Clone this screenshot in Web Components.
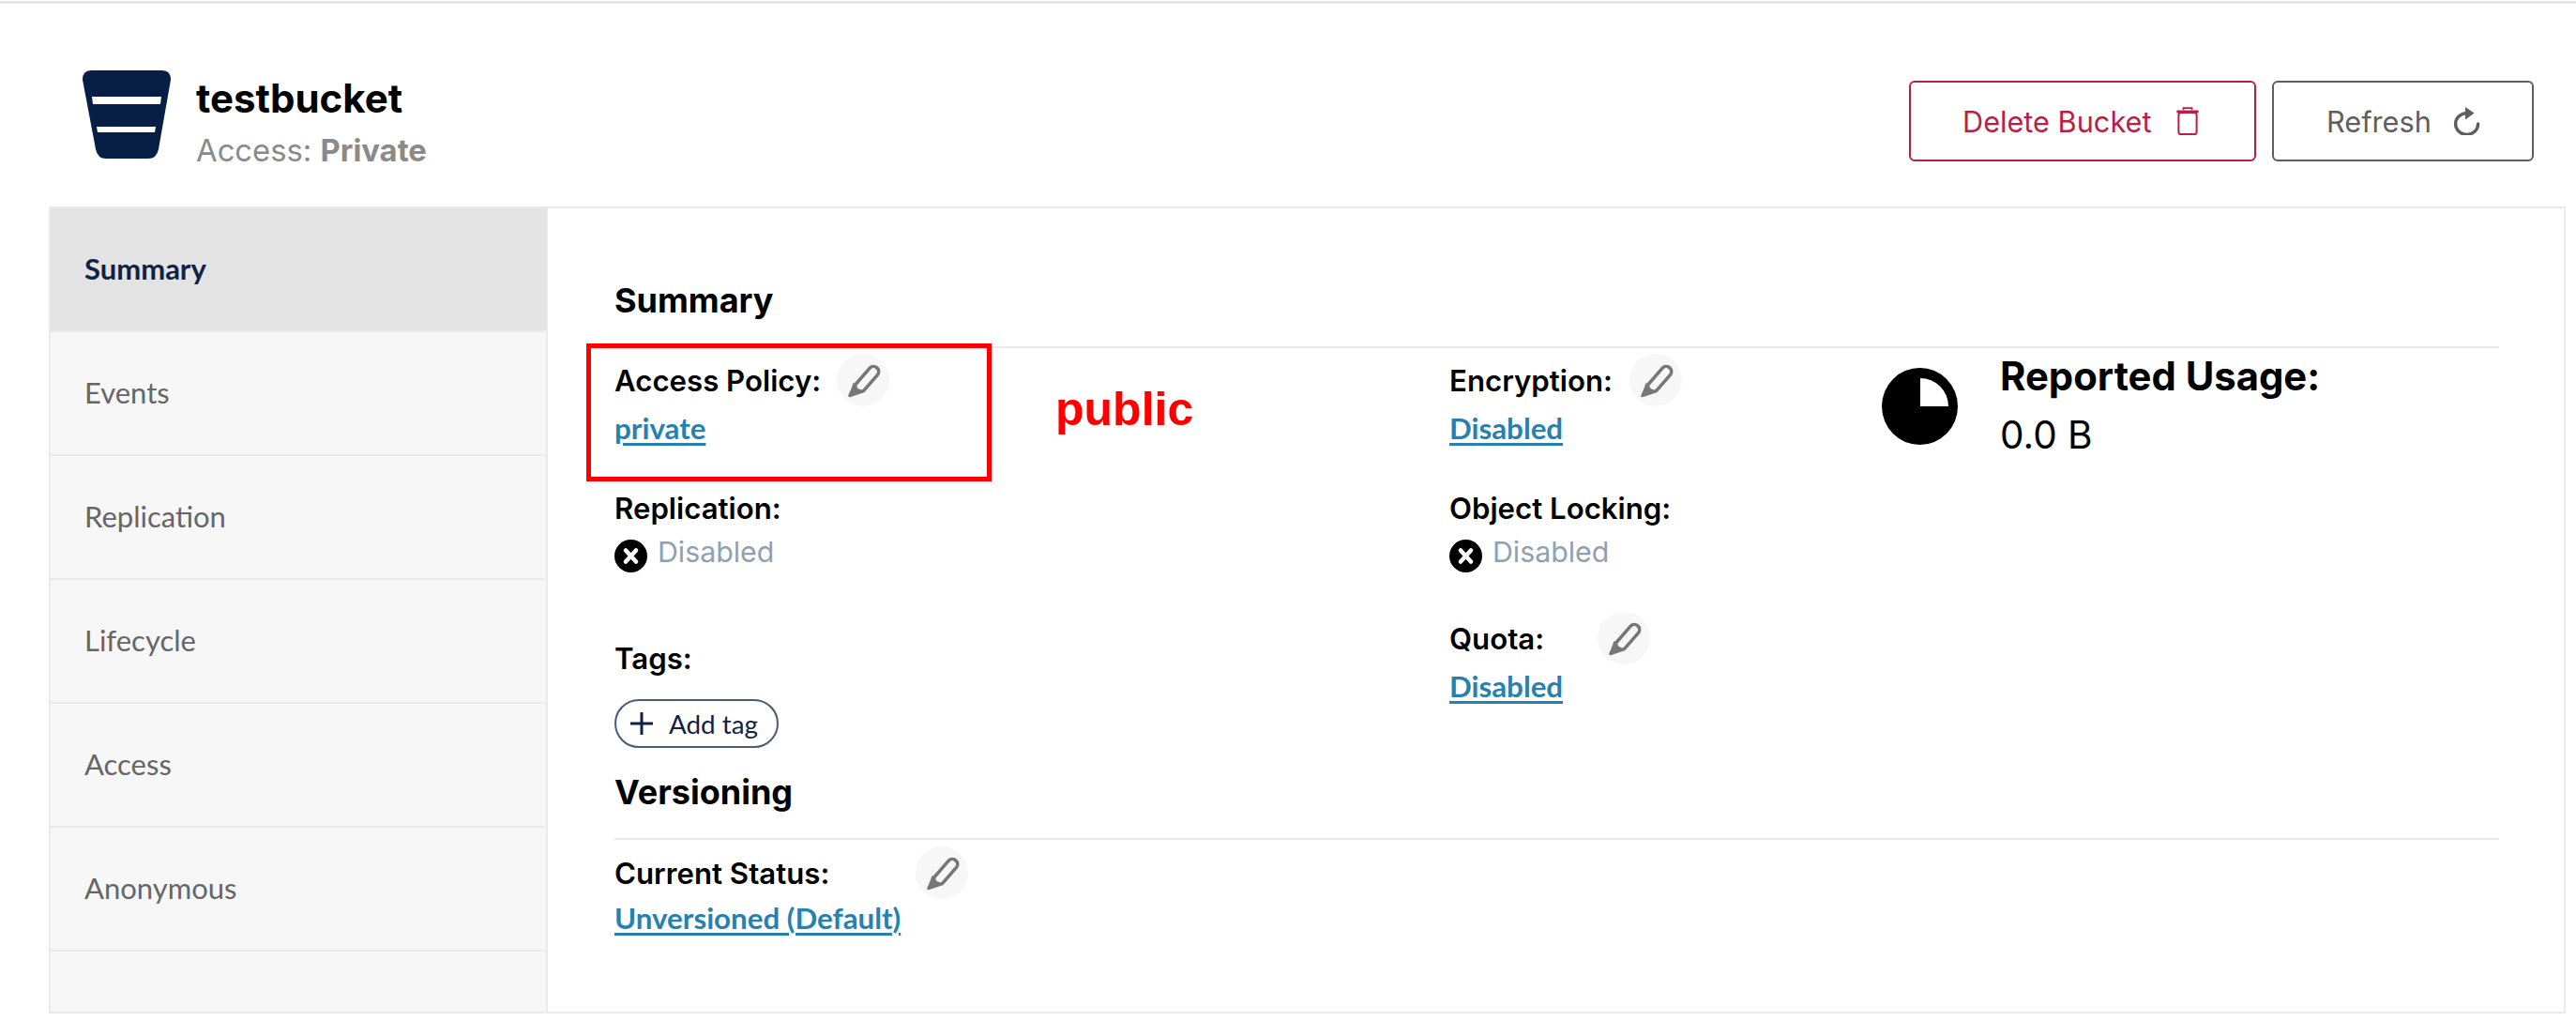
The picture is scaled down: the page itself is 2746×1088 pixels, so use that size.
<!doctype html>
<html>
<head>
<meta charset="utf-8">
<style>
  html, body { margin: 0; padding: 0; background: #fff; }
  body { width: 2746px; height: 1088px; overflow: hidden; font-family: Inter, "Liberation Sans", sans-serif; }
</style>
</head>
<body>
<bucket-page>
  <bucket-header slot="header" name="testbucket" access="Private">
    <action-button kind="danger" label="Delete Bucket" icon="trash"></action-button>
    <action-button kind="plain" label="Refresh" icon="refresh"></action-button>
  </bucket-header>
  <side-nav slot="nav">
    <nav-item active>Summary</nav-item>
    <nav-item>Events</nav-item>
    <nav-item>Replication</nav-item>
    <nav-item>Lifecycle</nav-item>
    <nav-item>Access</nav-item>
    <nav-item>Anonymous</nav-item>
  </side-nav>
  <summary-panel slot="main"></summary-panel>
</bucket-page>

<script>
const PENCIL = `<svg width="38" height="38" viewBox="0 0 34 34" fill="none">
  <path d="M10 21 L23.5 5.5 a4.9 4.9 0 0 1 7.4 6.4 L17.4 27.4 L4.6 31.6 Z" stroke="#777" stroke-width="3.2" stroke-linejoin="round"/>
  <path d="M3 33 L7.6 19.6 L10 21 L12.2 25 L17.4 27.4 Z" fill="#777"/>
</svg>`;

class BucketPage extends HTMLElement {
  constructor() {
    super();
    this.attachShadow({ mode: 'open' });
    this.shadowRoot.innerHTML = `<style>
      :host { display: block; width: 2746px; height: 1088px; box-sizing: border-box; border-top: 3px solid #e6e6e6; margin-top: 1px; }
      .panel { display: flex; height: 860px; margin: 0 11px 0 52px; box-sizing: border-box; border: 2px solid #eaeaea; }
    </style>
    <slot name="header"></slot>
    <div class="panel"><slot name="nav"></slot><slot name="main"></slot></div>`;
  }
}

class BucketHeader extends HTMLElement {
  constructor() {
    super();
    this.attachShadow({ mode: 'open' });
    this.shadowRoot.innerHTML = `<style>
      :host { display: flex; align-items: flex-start; height: 216px; box-sizing: border-box; padding: 71px 45px 0 88px; }
      svg { display: block; flex: none; }
      .names { margin-left: 27px; }
      h1 { margin: 5px 0 0; font: 700 42px/50px Inter, sans-serif; color: #000; }
      p { margin: 9px 0 0; font: 400 32.8px/42px Inter, sans-serif; color: #8a8a8a; }
      b { font-weight: 700; }
      .actions { margin-left: auto; margin-top: 11px; display: flex; gap: 17px; }
    </style>
    <svg width="94" height="94" viewBox="0 0 94 94">
      <path d="M9 0 H85 Q94 0 94 10 L81 84 Q79 94 70 94 H25 Q16 94 14 84 L0 10 Q0 0 9 0 Z" fill="#081f45"/>
      <path d="M10 28 H84 L83 36 H11 Z M15 60 H78 L77 66 H16 Z" fill="#fff"/>
    </svg>
    <div class="names"><h1></h1><p>Access: <b></b></p></div>
    <div class="actions"><slot></slot></div>`;
  }
  connectedCallback() {
    this.shadowRoot.querySelector('h1').textContent = this.getAttribute('name');
    this.shadowRoot.querySelector('b').textContent = this.getAttribute('access');
  }
}

const BUTTON_ICONS = {
  trash: `<svg width="26" height="30" viewBox="0 0 26 30" fill="none" stroke="currentColor" stroke-width="2">
    <rect x="3.4" y="6" width="19.2" height="23" rx="2.6"/>
    <path d="M1.4 5 H24.6" stroke-width="3"/><path d="M8.5 3 V1.2 H17.5 V3" stroke-width="1.8"/>
  </svg>`,
  refresh: `<svg width="29" height="30" viewBox="0 0 29 30" fill="none">
    <path d="M14 6.6 A12 11.4 0 1 0 26.6 18" stroke="currentColor" stroke-width="3.4" stroke-linecap="round"/>
    <path d="M13 0 L22.5 6.6 L13 13.4 Z" fill="currentColor"/>
  </svg>`
};

class ActionButton extends HTMLElement {
  constructor() {
    super();
    this.attachShadow({ mode: 'open' });
    this.shadowRoot.innerHTML = `<style>
      :host { display: flex; align-items: center; height: 86px; box-sizing: border-box; border: 2.5px solid currentColor; border-radius: 6px; font: 400 30.7px Inter, sans-serif; background: #fff; }
      :host([kind=danger]) { width: 370px; color: #b91f45; padding-left: 55px; gap: 26px; }
      :host([kind=plain]) { width: 279px; color: #5e5e5e; padding-left: 56px; gap: 23px; }
      svg { display: block; }
    </style><span></span><i style="display:contents"></i>`;
  }
  connectedCallback() {
    this.shadowRoot.querySelector('span').textContent = this.getAttribute('label');
    this.shadowRoot.querySelector('i').innerHTML = BUTTON_ICONS[this.getAttribute('icon')];
  }
}

class SideNav extends HTMLElement {
  constructor() {
    super();
    this.attachShadow({ mode: 'open' });
    this.shadowRoot.innerHTML = `<style>
      :host { display: block; flex: none; width: 530px; box-sizing: border-box; background: #f7f7f7; border-right: 2px solid #eaeaea; }
    </style><slot></slot>`;
  }
}

class NavItem extends HTMLElement {
  constructor() {
    super();
    this.attachShadow({ mode: 'open' });
    this.shadowRoot.innerHTML = `<style>
      :host { display: flex; align-items: center; height: 132px; box-sizing: border-box; padding: 0 0 2px 36px; border-bottom: 2px solid #eaeaea; font: 400 31px Lato, sans-serif; color: #666; }
      :host([active]) { background: #e3e3e3; color: #0e2346; font-weight: 700; }
    </style><slot></slot>`;
  }
}

class SectionTitle extends HTMLElement {
  constructor() {
    super();
    this.attachShadow({ mode: 'open' });
    this.shadowRoot.innerHTML = `<style>
      :host { display: block; box-sizing: border-box; height: 74px; border-bottom: 2px solid #eaeaea; font: 700 36px/46px Inter, sans-serif; color: #000; }
    </style><slot></slot>`;
  }
}

class InfoField extends HTMLElement {
  constructor() {
    super();
    this.attachShadow({ mode: 'open' });
    this.shadowRoot.innerHTML = `<style>
      :host { display: block; }
      .head { display: flex; align-items: center; height: 56px; font: 600 31.2px Inter, sans-serif; color: #000; }
      .label { padding-top: 2px; }
      .value { display: block; }
      .edit { flex: none; display: none; align-items: center; justify-content: center; width: 56px; height: 56px; border-radius: 50%; background: #f7f7f7; }
      :host([editable]) .edit { display: flex; }
    </style>
    <div class="head"><span class="label"></span><span class="edit">${PENCIL}</span></div>
    <div class="value"><slot></slot></div>`;
  }
  connectedCallback() {
    this.shadowRoot.querySelector('.label').textContent = this.getAttribute('label');
    const gap = this.getAttribute('edit-gap');
    if (gap) this.shadowRoot.querySelector('.edit').style.marginLeft = gap + 'px';
  }
}

class LinkValue extends HTMLElement {
  constructor() {
    super();
    this.attachShadow({ mode: 'open' });
    this.shadowRoot.innerHTML = `<style>
      :host { display: block; height: 48px; font: 700 31.3px/47px Lato, sans-serif; color: #2781b0; }
      u { text-decoration-thickness: 3px; text-underline-offset: 4px; }
    </style><u><slot></slot></u>`;
  }
}

class DisabledState extends HTMLElement {
  constructor() {
    super();
    this.attachShadow({ mode: 'open' });
    this.shadowRoot.innerHTML = `<style>
      :host { display: flex; height: 48px; gap: 11px; font: 400 30.3px/38px Inter, sans-serif; color: #8fa0b3; }
      svg { flex: none; margin-top: 6px; }
    </style>
    <svg width="35" height="35" viewBox="0 0 35 35">
      <circle cx="17.5" cy="17.5" r="17.5" fill="#000"/>
      <path d="M12 11.5 L23 23.5 M23 11.5 L12 23.5" stroke="#fff" stroke-width="4.6" stroke-linecap="round"/>
    </svg><span>Disabled</span>`;
  }
}

class AddTag extends HTMLElement {
  constructor() {
    super();
    this.attachShadow({ mode: 'open' });
    this.shadowRoot.innerHTML = `<style>
      :host { display: inline-flex; align-items: center; gap: 17px; height: 52px; box-sizing: border-box; padding: 0 20px 0 15px; border: 2px solid #4a5a7a; border-radius: 26px; font: 400 27.8px Lato, sans-serif; color: #0e2346; }
      svg { display: block; }
    </style>
    <svg width="24" height="24" viewBox="0 0 24 24"><path d="M12 0 V24 M0 12 H24" stroke="#0e2346" stroke-width="3"/></svg>
    <span>Add tag</span>`;
  }
}

class UsageReport extends HTMLElement {
  constructor() {
    super();
    this.attachShadow({ mode: 'open' });
    this.shadowRoot.innerHTML = `<style>
      :host { display: flex; align-items: flex-start; gap: 45px; color: #000; }
      svg { flex: none; margin-top: 21px; }
      h3 { margin: 2px 0 0; font: 700 41.8px/56px Inter, sans-serif; }
      p { margin: 10px 0 0; font: 400 40.5px/50px Inter, sans-serif; }
    </style>
    <svg width="81" height="82" viewBox="0 0 81 82">
      <ellipse cx="40.5" cy="41" rx="40.5" ry="41" fill="#000"/>
      <path d="M41 41 V11 A30 30 0 0 1 71 41 Z" fill="#fff"/>
    </svg>
    <div><h3>Reported Usage:</h3><p>0.0 B</p></div>`;
  }
}

class SummaryPanel extends HTMLElement {
  constructor() {
    super();
    this.attachShadow({ mode: 'open' });
    this.shadowRoot.innerHTML = `<style>
      :host { display: block; position: relative; width: 2151px; box-sizing: border-box; height: 100%; padding: 75px 69px 0 71px; }
      .cols { display: flex; }
      .left { flex: none; width: 890px; }
      .mid { flex: none; width: 461px; }
      .mark { position: absolute; left: 41px; top: 144px; width: 432px; height: 147px; box-sizing: border-box; border: 5px solid #f00; }
      .note { position: absolute; left: 541px; top: 184px; font: 700 50px/60px "Liberation Sans", sans-serif; color: #f00; }
    </style>
    <section-title>Summary</section-title>
    <div class="cols">
      <div class="left">
        <info-field label="Access Policy:" editable edit-gap="17" style="margin-top:6px"><link-value>private</link-value></info-field>
        <info-field label="Replication:" style="margin-top:32px"><disabled-state></disabled-state></info-field>
        <info-field label="Tags:" style="margin-top:56px"><add-tag style="margin-top:16px"></add-tag></info-field>
      </div>
      <div class="mid">
        <info-field label="Encryption:" editable edit-gap="18" style="margin-top:6px"><link-value>Disabled</link-value></info-field>
        <info-field label="Object Locking:" style="margin-top:32px"><disabled-state></disabled-state></info-field>
        <info-field label="Quota:" editable edit-gap="57" style="margin-top:35px"><link-value>Disabled</link-value></info-field>
      </div>
      <usage-report></usage-report>
    </div>
    <section-title style="margin-top:24px">Versioning</section-title>
    <info-field label="Current Status:" editable edit-gap="92" style="margin-top:7px"><link-value style="margin-top:-3px">Unversioned (Default)</link-value></info-field>
    <div class="mark"></div>
    <div class="note">public</div>`;
  }
}

customElements.define('bucket-page', BucketPage);
customElements.define('bucket-header', BucketHeader);
customElements.define('action-button', ActionButton);
customElements.define('side-nav', SideNav);
customElements.define('nav-item', NavItem);
customElements.define('section-title', SectionTitle);
customElements.define('info-field', InfoField);
customElements.define('link-value', LinkValue);
customElements.define('disabled-state', DisabledState);
customElements.define('add-tag', AddTag);
customElements.define('usage-report', UsageReport);
customElements.define('summary-panel', SummaryPanel);
</script>
</body>
</html>
